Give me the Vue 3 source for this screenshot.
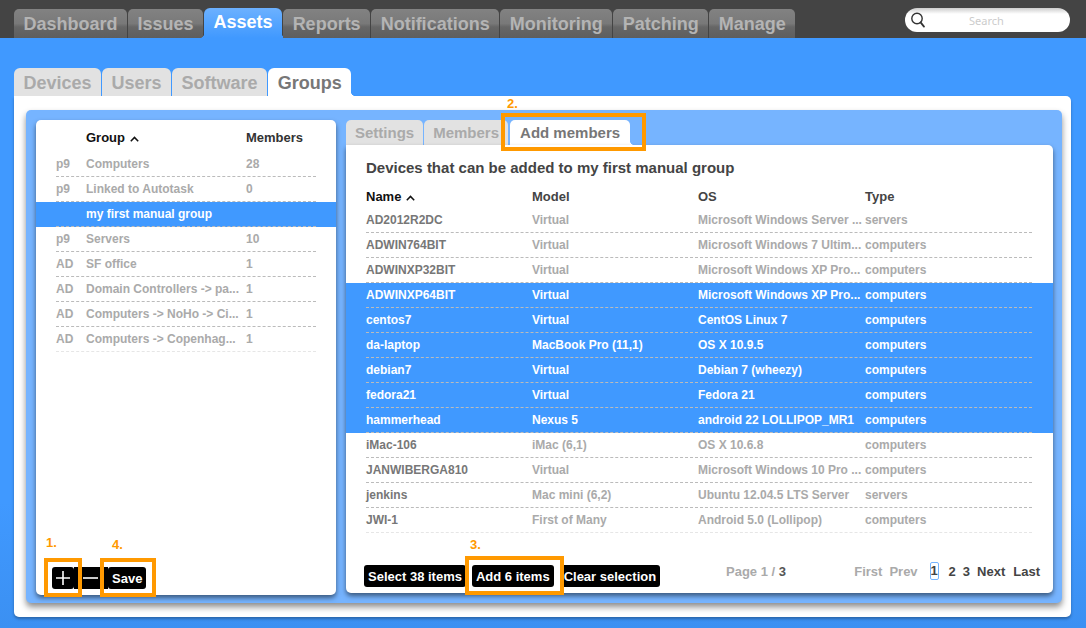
<script setup>
const navTabs = ["Dashboard", "Issues", "Assets", "Reports", "Notifications", "Monitoring", "Patching", "Manage"];
const subTabs = ["Devices", "Users", "Software", "Groups"];
const groups = [
  { src: "p9", name: "Computers", count: "28" },
  { src: "p9", name: "Linked to Autotask", count: "0" },
  { src: "", name: "my first manual group", count: "", selected: true },
  { src: "p9", name: "Servers", count: "10" },
  { src: "AD", name: "SF office", count: "1" },
  { src: "AD", name: "Domain Controllers -> pa...", count: "1" },
  { src: "AD", name: "Computers -> NoHo -> Ci...", count: "1" },
  { src: "AD", name: "Computers -> Copenhag...", count: "1" },
];
const devices = [
  ["AD2012R2DC", "Virtual", "Microsoft Windows Server ...", "servers"],
  ["ADWIN764BIT", "Virtual", "Microsoft Windows 7 Ultim...", "computers"],
  ["ADWINXP32BIT", "Virtual", "Microsoft Windows XP Pro...", "computers"],
  ["ADWINXP64BIT", "Virtual", "Microsoft Windows XP Pro...", "computers", true],
  ["centos7", "Virtual", "CentOS Linux 7", "computers", true],
  ["da-laptop", "MacBook Pro (11,1)", "OS X 10.9.5", "computers", true],
  ["debian7", "Virtual", "Debian 7 (wheezy)", "computers", true],
  ["fedora21", "Virtual", "Fedora 21", "computers", true],
  ["hammerhead", "Nexus 5", "android 22 LOLLIPOP_MR1", "computers", true],
  ["iMac-106", "iMac (6,1)", "OS X 10.6.8", "computers"],
  ["JANWIBERGA810", "Virtual", "Microsoft Windows 10 Pro ...", "computers"],
  ["jenkins", "Mac mini (6,2)", "Ubuntu 12.04.5 LTS Server", "servers"],
  ["JWI-1", "First of Many", "Android 5.0 (Lollipop)", "computers"],
];
</script>

<template>
  <div class="page">
    <header class="topbar">
      <nav class="nav">
        <a v-for="t in navTabs" :key="t" class="nav-tab" :class="{ active: t === 'Assets' }">{{ t }}</a>
      </nav>
      <div class="search">
        <svg class="search-icon" width="18" height="18" viewBox="0 0 18 18">
          <circle cx="8" cy="7.5" r="5.2" fill="none" stroke="#333" stroke-width="1.4" />
          <path d="M11.6 11.4 L15 15.6" stroke="#333" stroke-width="1.8" stroke-linecap="round" />
        </svg>
        <span class="search-text">Search</span>
      </div>
    </header>

    <main class="content">
      <div class="subtabs">
        <a v-for="t in subTabs" :key="t" class="subtab" :class="{ active: t === 'Groups' }">{{ t }}</a>
      </div>
      <section class="sheet">
        <div class="panel">
          <div class="left-card">
            <div class="group-row group-head">
              <span></span>
              <span class="sorted">Group <svg class="caret" width="9" height="6" viewBox="0 0 9 6"><path d="M.8 5.2 4.5 1.4 8.2 5.2" fill="none" stroke="#111" stroke-width="1.5" /></svg></span>
              <span>Members</span>
            </div>
            <div v-for="g in groups" :key="g.name" class="group-wrap" :class="{ selected: g.selected }">
              <div class="group-row">
                <span>{{ g.src }}</span>
                <span>{{ g.name }}</span>
                <span>{{ g.count }}</span>
              </div>
            </div>
            <div class="left-actions">
              <button class="btn icon-btn">
                <svg width="14" height="14" viewBox="0 0 14 14"><path d="M7 0V14M0 7H14" stroke="#fff" stroke-width="1.6" /></svg>
              </button>
              <button class="btn icon-btn minus">
                <svg width="15" height="14" viewBox="0 0 15 14"><path d="M0 7H15" stroke="#fff" stroke-width="1.6" /></svg>
              </button>
              <button class="btn">Save</button>
            </div>
            <span class="step step-1">1.</span>
            <span class="step step-4">4.</span>
            <i class="mark mark-plus"></i>
            <i class="mark mark-save"></i>
          </div>

          <div class="right-col">
            <div class="inner-tabs">
              <a class="inner-tab">Settings</a>
              <a class="inner-tab">Members</a>
              <a class="inner-tab active">Add members</a>
            </div>
            <div class="right-card">
              <h2 class="title">Devices that can be added to my first manual group</h2>
              <div class="dev-row dev-head">
                <span class="sorted">Name <svg class="caret" width="9" height="6" viewBox="0 0 9 6"><path d="M.8 5.2 4.5 1.4 8.2 5.2" fill="none" stroke="#111" stroke-width="1.5" /></svg></span>
                <span>Model</span>
                <span>OS</span>
                <span>Type</span>
              </div>
              <div v-for="d in devices" :key="d[0]" class="dev-wrap" :class="{ selected: d[4] }">
                <div class="dev-row">
                  <span class="dev-name">{{ d[0] }}</span>
                  <span>{{ d[1] }}</span>
                  <span>{{ d[2] }}</span>
                  <span>{{ d[3] }}</span>
                </div>
              </div>
              <div class="right-actions">
                <button class="btn">Select 38 items</button>
                <button class="btn add-btn">Add 6 items</button>
                <button class="btn clear-btn">Clear selection</button>
                <span class="page-info">Page 1 / <b>3</b></span>
                <div class="pager">
                  <a class="off">First</a>
                  <a class="off">Prev</a>
                  <a class="cur">1</a>
                  <a>2</a>
                  <a>3</a>
                  <a>Next</a>
                  <a class="last">Last</a>
                </div>
              </div>
              <span class="step step-3">3.</span>
              <i class="mark mark-add"></i>
            </div>
            <span class="step step-2">2.</span>
            <i class="mark mark-tab"></i>
          </div>
        </div>
      </section>
    </main>
  </div>
</template>

<style>
html,
body {
  margin: 0;
  background: #4099ff;
}
</style>

<style scoped>
.page {
  width: 1086px;
  height: 628px;
  overflow: hidden;
  background: linear-gradient(#4099ff 80%, #3b90f2);
  font-family: "Liberation Sans", Arial, sans-serif;
  font-weight: bold;
}

.topbar {
  height: 38px;
  background: #444;
  display: flex;
  align-items: flex-end;
  padding: 0 16px 0 14px;
  box-sizing: border-box;
}

.nav {
  display: flex;
  gap: 1px;
}

.nav-tab {
  position: relative;
  height: 29px;
  padding: 0 9.5px;
  box-sizing: border-box;
  border-radius: 5px 5px 0 0;
  line-height: 30px;
  font-size: 18px;
  color: #b4b4b4;
  background: linear-gradient(#828282, #797979 50%, #666 62%, #5e5e5e);
}

.nav-tab.active {
  height: 30px;
  margin-top: -1px;
  line-height: 28px;
  color: #fff;
  background: linear-gradient(#6cb1ff, #4099ff);
  border-radius: 6px 6px 0 0;
}

.nav-tab.active::before,
.nav-tab.active::after {
  content: "";
  position: absolute;
  bottom: 0;
  width: 5px;
  height: 5px;
}

.nav-tab.active::before {
  left: -5px;
  background: radial-gradient(circle at 0 0, transparent 5px, #4099ff 5.5px);
}

.nav-tab.active::after {
  right: -5px;
  background: radial-gradient(circle at 100% 0, transparent 5px, #4099ff 5.5px);
}

.search {
  margin-left: auto;
  margin-bottom: 6px;
  width: 165px;
  height: 24px;
  border-radius: 12px;
  background: linear-gradient(#ccc, #fff 25%);
  display: flex;
  align-items: center;
  position: relative;
}

.search-icon {
  margin-left: 4px;
}

.search-text {
  position: absolute;
  left: 64px;
  font-weight: normal;
  font-size: 11px;
  color: #ccc;
  top: 5px;
  font-family: "Noto Sans", sans-serif;
}

.content {
  padding: 30px 14px 0;
}

.subtabs {
  display: flex;
  gap: 1px;
  height: 28px;
}

.subtab {
  position: relative;
  padding: 0 9.5px;
  border-radius: 6px 6px 0 0;
  background: #e2e2e2;
  color: #aaa;
  font-size: 18px;
  line-height: 30px;
}

.subtab.active {
  background: #fff;
  color: #777;
}

.subtab.active::after,
.inner-tab.active::after {
  content: "";
  position: absolute;
  right: -5px;
  bottom: 0;
  width: 5px;
  height: 5px;
  background: radial-gradient(circle at 100% 0, transparent 5px, #fff 5.5px);
}

.sheet {
  background: #fff;
  width: 1057px;
  height: 521px;
  border-radius: 0 5px 5px 5px;
  padding: 14px 9px 14px 12px;
  box-sizing: border-box;
  box-shadow: 0 2px 3px rgba(0, 0, 0, 0.3);
}

.panel {
  background: #76b4ff;
  height: 493px;
  border-radius: 5px;
  padding: 10px 9px 10px 10px;
  box-sizing: border-box;
  display: flex;
  gap: 10px;
  box-shadow: 0 4px 6px rgba(0, 0, 0, 0.45);
}

.left-card {
  position: relative;
  flex: none;
  width: 300px;
  height: 475px;
  background: #fff;
  border-radius: 5px;
  box-shadow: 0 3px 5px rgba(0, 0, 0, 0.5);
  box-sizing: border-box;
  padding-top: 5px;
}

.group-row {
  display: grid;
  grid-template-columns: 30px 160px 70px;
  margin: 0 20px;
  height: 25px;
  line-height: 25px;
  font-size: 12px;
  color: #aaa;
  border-bottom: 1px dashed #bbb;
  box-sizing: border-box;
}

.group-wrap:nth-child(9) .group-row {
  border-bottom-color: #e6e6e6;
}

.group-head {
  font-size: 13px;
  color: #333;
  border-bottom: none;
  margin-bottom: 2px;
}

.sorted {
  color: #111;
}

.caret {
  margin-left: 1px;
}

.group-wrap.selected {
  background: #4099ff;
}

.group-wrap.selected .group-row {
  color: #fff;
}

.left-actions {
  position: absolute;
  left: 16px;
  bottom: 6px;
  display: flex;
}

.btn {
  height: 22px;
  padding: 0 4px;
  border: none;
  border-radius: 3px;
  background: #000;
  color: #fff;
  font: bold 13px "Liberation Sans", Arial, sans-serif;
  display: flex;
  align-items: center;
  justify-content: center;
  white-space: nowrap;
}

.icon-btn {
  width: 22px;
  padding: 0;
}

.minus {
  width: 34px;
  padding: 0 10px 0 9px;
  justify-content: flex-start;
  border-radius: 0;
}

.right-col {
  position: relative;
  flex: none;
  width: 707px;
  display: flex;
  flex-direction: column;
}

.inner-tabs {
  display: flex;
  height: 25px;
  gap: 1px;
}

.inner-tab {
  position: relative;
  padding: 0 9px;
  border-radius: 5px 5px 0 0;
  background: #e2e2e2;
  color: #aaa;
  font-size: 15px;
  line-height: 26px;
}

.inner-tab.active {
  background: #fff;
  color: #777;
  padding: 0 10px;
  margin-left: 1px;
}

.right-card {
  position: relative;
  height: 450px;
  background: #fff;
  border-radius: 0 5px 5px 5px;
  box-shadow: 0 3px 5px rgba(0, 0, 0, 0.5);
}

.title {
  margin: 0;
  padding: 13px 20px 0;
  font-size: 15px;
  line-height: 20px;
  color: #444;
}

.dev-row {
  display: grid;
  grid-template-columns: 166px 166px 167px 1fr;
  margin: 0 21px 0 20px;
  height: 25px;
  line-height: 24px;
  font-size: 12px;
  color: #aaa;
  border-bottom: 1px dashed #bbb;
  box-sizing: border-box;
}

.dev-wrap:nth-child(15) .dev-row {
  border-bottom-color: #e6e6e6;
}

.dev-name {
  color: #777;
}

.dev-head {
  margin-top: 6px;
  height: 24px;
  font-size: 13px;
  line-height: 25px;
  color: #444;
  border-bottom: none;
}

.dev-wrap.selected {
  background: #4099ff;
}

.dev-wrap.selected .dev-row,
.dev-wrap.selected .dev-name {
  color: #fff;
}

.right-actions {
  position: absolute;
  left: 18px;
  right: 13px;
  bottom: 6px;
  height: 22px;
  display: flex;
  align-items: flex-start;
}

.add-btn {
  margin-left: 6px;
}

.clear-btn {
  margin-left: 6px;
}

.page-info {
  position: absolute;
  left: 362px;
  top: -1px;
  font-size: 13px;
  line-height: 15px;
  color: #aaa;
}

.page-info b {
  color: #555;
}

.pager {
  margin-left: auto;
  margin-top: -1px;
  display: flex;
  gap: 7px;
  font-size: 13px;
  line-height: 15px;
  color: #444;
}

.pager .off {
  color: #aaa;
}

.pager .cur {
  box-sizing: border-box;
  width: 9px;
  height: 18px;
  line-height: 16px;
  text-align: center;
  border: 1px solid #76b4ff;
  border-radius: 2px;
  margin: -2px 3px 0 5px;
}

.pager .last {
  margin-left: 1px;
}

.step {
  position: absolute;
  color: #f90;
  font-size: 13px;
  line-height: 14px;
}

.step-1 { left: 10px; bottom: 45px; }
.step-4 { left: 76px; bottom: 43px; }
.step-2 { left: 161px; top: -23px; }
.step-3 { left: 124px; bottom: 41px; }

.mark {
  position: absolute;
  border: 4px solid #f90;
  box-sizing: border-box;
}

.mark-plus { left: 8px; bottom: -2px; width: 38px; height: 39px; }
.mark-save { left: 64px; bottom: -2px; width: 56px; height: 39px; }
.mark-add { left: 119px; bottom: -2px; width: 99px; height: 39px; }
.mark-tab { left: 155px; top: -7px; width: 145px; height: 38px; }
</style>
